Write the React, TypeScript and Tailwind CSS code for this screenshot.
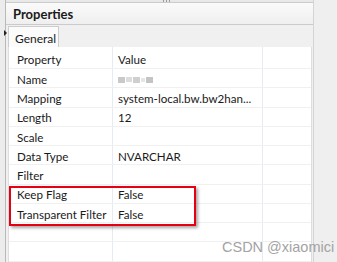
import React from "react";

const rows: [string, string][] = [
  ["Name", ""],
  ["Mapping", "system-local.bw.bw2han..."],
  ["Length", "12"],
  ["Scale", ""],
  ["Data Type", "NVARCHAR"],
  ["Filter", ""],
  ["Keep Flag", "False"],
  ["Transparent Filter", "False"],
  ["", ""],
  ["", ""],
];

function Blurred() {
  // the value was pixelated in the original screenshot
  return (
    <div className="flex items-center gap-[1px] blur-[0.6px]">
      <span className="h-[6px] w-[7px] bg-[#c9c9c9]" />
      <span className="h-[5px] w-[6px] bg-[#dcdcdc]" />
      <span className="h-[6px] w-[7px] bg-[#cfcfcf]" />
      <span className="h-[4px] w-[4px] bg-[#e6e6e6]" />
      <span className="h-[6px] w-[7px] bg-[#c4c4c4]" />
    </div>
  );
}

export default function App() {
  return (
    <div
      className="relative flex h-[262px] w-[337px] overflow-hidden bg-[#f0f0f0] text-[11.6px] leading-none text-[#1a1a1a]"
      style={{ fontFamily: 'Lato, "Open Sans", sans-serif' }}
    >
      {/* left gutter */}
      <div className="w-[5px] shrink-0 bg-[#ececec]" />
      <div className="w-px shrink-0 bg-[#b9b9b9]" />

      {/* properties panel */}
      <div className="flex w-[307px] shrink-0 flex-col">
        <div className="h-[2px] bg-[#e8e8e8]" />
        <div className="flex h-[23px] items-center border-y border-[#cbcbcb] bg-gradient-to-b from-[#fafafa] to-[#efefef] pl-[7px] pt-[1px] text-[13px] font-bold">
          Properties
        </div>
        <div className="flex h-[22px] items-end pl-[2px]">
          <div className="flex h-[21px] w-[51px] items-center border border-b-0 border-[#cdcdcd] bg-[#fbfbfb] pl-[6px] pt-[3px] text-[12px]">
            General
          </div>
        </div>

        {/* table */}
        <div className="ml-[2px] mr-px flex-1 border-l border-r border-[#dedede] bg-white">
          <div className="grid h-[22px] grid-cols-[104px_150px_1fr] border-b border-[#f0f0f0]">
            <div className="flex items-center border-r border-[#e6ebf1] pl-[8px] pt-[5px]">Property</div>
            <div className="flex items-center border-r border-[#e6ebf1] pl-[5px] pt-[5px]">Value</div>
            <div />
          </div>
          {rows.map(([k, v], i) => (
            <div key={i} className="grid h-[19.25px] grid-cols-[104px_150px_1fr] border-b border-[#f0f0f0]">
              <div className="flex items-center border-r border-[#e6ebf1] pl-[8px] pt-[3px] whitespace-nowrap">{k}</div>
              <div className="flex items-center border-r border-[#e6ebf1] pl-[5px] pt-[3px] whitespace-nowrap">
                {k === "Name" ? <Blurred /> : v}
              </div>
              <div />
            </div>
          ))}
        </div>
      </div>

      {/* right gutter */}
      <div className="w-px shrink-0 bg-[#d4d4d4]" />
      <div className="flex-1 bg-[#efefef]" />

      {/* sash arrow */}
      <div className="absolute left-[4px] top-[30px] h-0 w-0 border-y-[3px] border-l-[3px] border-y-transparent border-l-[#222]" />

      {/* toolbar dots */}
      <div className="absolute left-[163px] top-0 flex gap-[2px]">
        <span className="h-[2px] w-[1px] bg-[#9a9a9a]" />
        <span className="h-[2px] w-[1px] bg-[#9a9a9a]" />
        <span className="h-[2px] w-[1px] bg-[#9a9a9a]" />
      </div>

      {/* red highlight */}
      <div className="absolute left-[9px] top-[186px] h-[40px] w-[187px] border-2 border-[#e60012] shadow-[2px_2px_3px_rgba(0,0,0,0.35)]" />

      {/* watermark */}
      <div
        className="absolute left-[222px] top-[240px] text-[14.5px] leading-none text-[#a3a3a3]"
        style={{ fontFamily: '"Liberation Sans", Arial, sans-serif' }}
      >
        CSDN @xiaomici
      </div>
    </div>
  );
}
